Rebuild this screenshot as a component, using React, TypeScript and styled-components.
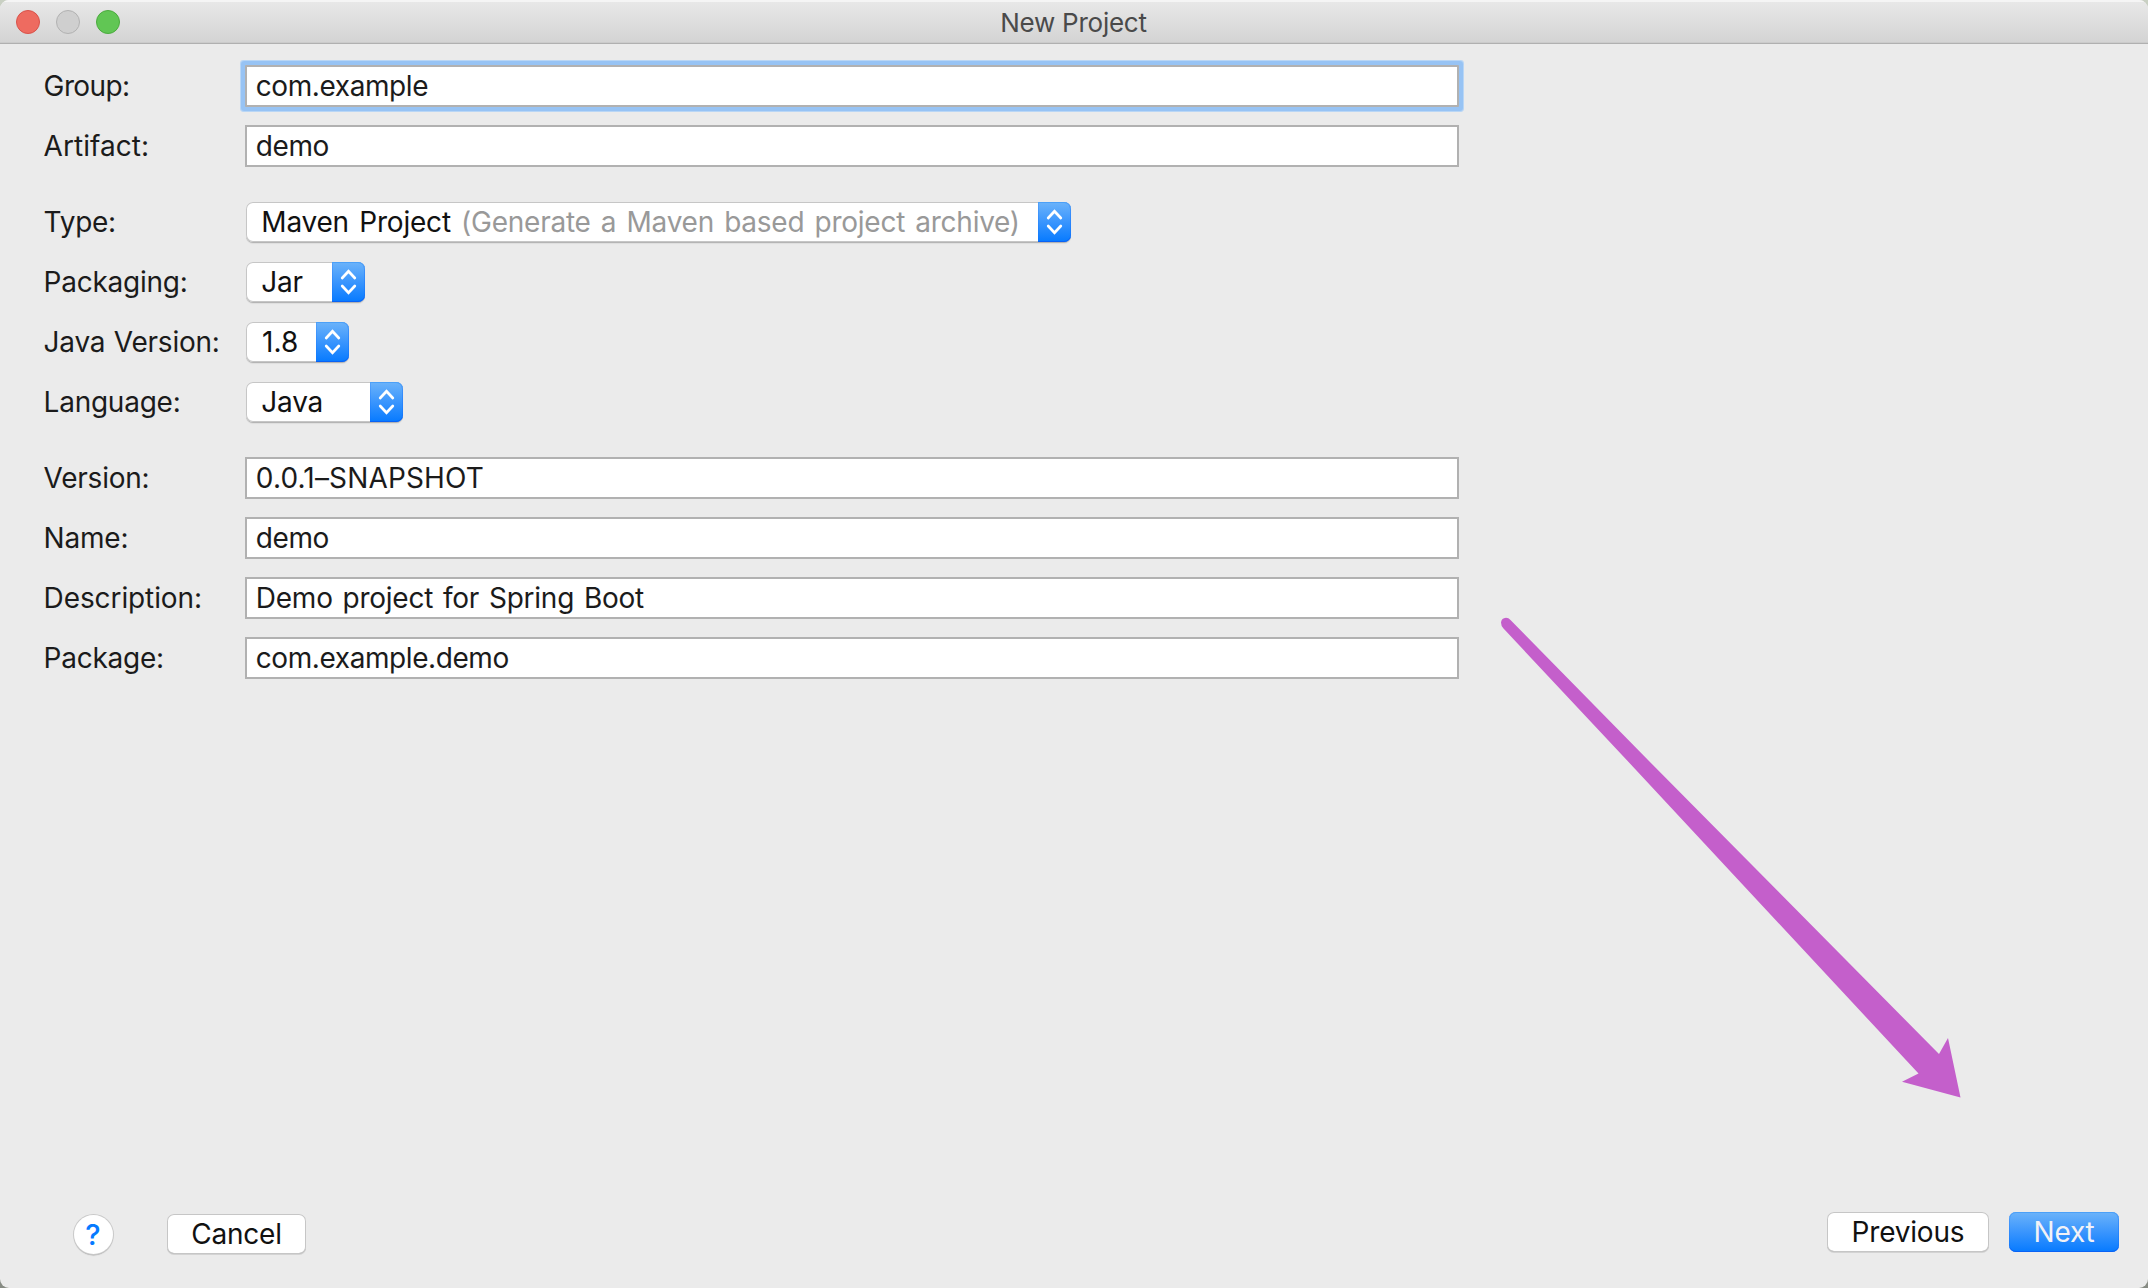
import React from "react";
import styled, { createGlobalStyle, css } from "styled-components";

const GlobalStyle = createGlobalStyle`
  body {
    margin: 0;
    background: linear-gradient(#c9d0c3, #878b83);
  }
`;

const blueFill = css`
  background: linear-gradient(#6cb3fa 0%, #3f98fd 45%, #067aff 100%);
  box-shadow: inset 0 1px 0 #4ba0f8, inset 0 -1px 0 #0a62f4, inset 1px 0 0 rgba(20, 110, 250, 0.25),
    inset -1px 0 0 rgba(20, 110, 250, 0.4);
`;

const Window = styled.main`
  position: relative;
  box-sizing: border-box;
  display: flex;
  flex-direction: column;
  width: 2148px;
  height: 1288px;
  overflow: hidden;
  border-radius: 9px;
  background: #ebebeb;
  color: #1b1b1b;
  font: 28px/40px Inter, "Liberation Sans", sans-serif;
  letter-spacing: -0.25px;
  word-spacing: 2.4px;
`;

const TitleBar = styled.header`
  box-sizing: border-box;
  display: grid;
  grid-template-columns: 1fr auto 1fr;
  align-items: center;
  flex: none;
  height: 44px;
  padding: 0 17px 0 16px;
  border-bottom: 1px solid #b0b0b0;
  background: linear-gradient(#e9e9e9, #d3d3d3);
  box-shadow: inset 0 2px 0 #f5f5f5, inset 0 -1px 0 #cbcbcb;
`;

const Lights = styled.div`
  display: flex;
  gap: 16px;
`;

const Light = styled.i<{ $fill: string; $edge: string }>`
  box-sizing: border-box;
  width: 24px;
  height: 24px;
  border: 1px solid ${(p) => p.$edge};
  border-radius: 50%;
  background: ${(p) => p.$fill};
`;

const Title = styled.h1`
  margin: 0;
  padding-top: 2px;
  color: #4a4a4a;
  font-size: 26px;
  font-weight: 400;
  line-height: 40px;
  word-spacing: 0;
`;

const Form = styled.form`
  display: flex;
  flex: 1;
  flex-direction: column;
  gap: 34px;
  padding: 21px 0 0 43px;
`;

const Section = styled.section`
  display: grid;
  gap: 18px;
`;

const Row = styled.label`
  display: grid;
  grid-template-columns: 202px 1214px;
  align-items: center;
  height: 42px;
`;

const Label = styled.span<{ $tracking?: number }>`
  padding-left: 0.6px;
  letter-spacing: ${(p) => p.$tracking ?? -0.25}px;
  word-spacing: 1px;
`;

const Field = styled.input<{ $focused?: boolean; $tracking?: number }>`
  box-sizing: border-box;
  width: 100%;
  height: 42px;
  padding: 0 8.8px;
  border: 2px solid #b1b1b1;
  border-radius: 0;
  outline: none;
  background: #fff;
  color: inherit;
  font: inherit;
  letter-spacing: ${(p) => p.$tracking ?? -0.42}px;
  word-spacing: 2.2px;
  ${(p) =>
    p.$focused &&
    css`
      border-radius: 1px;
      box-shadow: 0 0 0 4px #97c3f4, 0 0 0 5px #b9d6f5;
    `}
`;

const Select = styled.button<{ $width: number }>`
  box-sizing: border-box;
  display: flex;
  align-items: stretch;
  justify-content: space-between;
  width: ${(p) => p.$width}px;
  height: 40px;
  margin-left: 1px;
  padding: 0;
  border: 0;
  border-radius: 7px;
  background: #fff;
  box-shadow: inset 0 0 0 1px #c6c6c6, 0 1px 0 #b4b4b4, 0 2px 1px rgba(0, 0, 0, 0.06);
  color: #111;
  font: inherit;
`;

const Value = styled.span<{ $tracking?: number; $indent?: number }>`
  padding-left: ${(p) => p.$indent ?? 15.3}px;
  letter-spacing: ${(p) => p.$tracking ?? -0.2}px;
  word-spacing: 2.6px;
  white-space: pre;
`;

const Hint = styled.span`
  color: #999;
  letter-spacing: -0.25px;
`;

const Stepper = styled.span`
  display: grid;
  place-items: center;
  width: 33px;
  height: 40px;
  border-radius: 0 7px 7px 0;
  ${blueFill}
`;

const Footer = styled.footer`
  display: flex;
  align-items: flex-start;
  justify-content: space-between;
  height: 76px;
  padding: 0 29px 0 73.5px;
`;

const Group = styled.div<{ $gap: number; $top?: number }>`
  display: flex;
  align-items: center;
  gap: ${(p) => p.$gap}px;
  padding-top: ${(p) => p.$top ?? 0}px;
`;

const Button = styled.button<{ $width: number; $primary?: boolean }>`
  width: ${(p) => p.$width}px;
  height: 40px;
  padding: 0;
  border: 0;
  border-radius: 7px;
  background: #fff;
  box-shadow: inset 0 0 0 1px #c6c6c6, inset 0 -1px 0 #b0b0b0, 0 1px 0 rgba(0, 0, 0, 0.1);
  color: #111;
  font: inherit;
  letter-spacing: -0.2px;
  ${(p) =>
    p.$primary &&
    css`
      ${blueFill}
      color: #f2f2f6;
    `}
`;

const Help = styled.button`
  display: grid;
  place-items: center;
  width: 39px;
  height: 39px;
  margin-top: 1px;
  padding: 0;
  border: 0;
  border-radius: 50%;
  background: #fff;
  box-shadow: 0 0 0 1px #c9c9c9, 0 1.5px 1px #a8a8a8;
  color: #067aff;
  font: 500 29px/39px Inter, "Liberation Sans", sans-serif;
`;

const Pointer = styled.svg`
  position: absolute;
  left: 1490px;
  top: 600px;
  pointer-events: none;
`;

function Chevrons() {
  return (
    <Stepper>
      <svg width="33" height="40" fill="none" stroke="#fff" strokeWidth="2.7" strokeLinecap="round" strokeLinejoin="miter">
        <path d="M10.2 16 16.5 9.3 22.8 16M10.2 24 16.5 30.7 22.8 24" />
      </svg>
    </Stepper>
  );
}

interface TextRowProps {
  label: string;
  value: string;
  focused?: boolean;
  tracking?: number;
  labelTracking?: number;
}

function TextRow({ label, value, focused, tracking, labelTracking }: TextRowProps) {
  return (
    <Row>
      <Label $tracking={labelTracking}>{label}</Label>
      <Field readOnly value={value} $focused={focused} $tracking={tracking} />
    </Row>
  );
}

interface SelectRowProps {
  label: string;
  value: string;
  width: number;
  hint?: string;
  tracking?: number;
  indent?: number;
}

function SelectRow({ label, value, width, hint, tracking, indent }: SelectRowProps) {
  return (
    <Row as="div">
      <Label>{label}</Label>
      <Select type="button" $width={width}>
        <Value $tracking={tracking} $indent={indent}>
          {value}
          {hint && <Hint> {hint}</Hint>}
        </Value>
        <Chevrons />
      </Select>
    </Row>
  );
}

export default function App() {
  return (
    <Window>
      <GlobalStyle />
      <TitleBar>
        <Lights>
          <Light $fill="#ee6b60" $edge="#d9524a" />
          <Light $fill="#cfcfcf" $edge="#b2b2b2" />
          <Light $fill="#61c654" $edge="#4bab3e" />
        </Lights>
        <Title>New Project</Title>
        <span />
      </TitleBar>
      <Form>
        <Section>
          <TextRow label="Group:" value="com.example" focused labelTracking={-0.6} />
          <TextRow label="Artifact:" value="demo" labelTracking={0.05} />
        </Section>
        <Section>
          <SelectRow label="Type:" value="Maven Project" hint="(Generate a Maven based project archive)" width={825} />
          <SelectRow label="Packaging:" value="Jar" width={119} />
          <SelectRow label="Java Version:" value="1.8" width={103} tracking={0.1} indent={16} />
          <SelectRow label="Language:" value="Java" width={157} />
        </Section>
        <Section>
          <TextRow label="Version:" value="0.0.1–SNAPSHOT" tracking={0.16} />
          <TextRow label="Name:" value="demo" labelTracking={-0.2} />
          <TextRow label="Description:" value="Demo project for Spring Boot" tracking={-0.24} labelTracking={-0.1} />
          <TextRow label="Package:" value="com.example.demo" />
        </Section>
      </Form>
      <Footer>
        <Group $gap={54.5} $top={2}>
          <Help type="button">?</Help>
          <Button type="button" $width={139}>Cancel</Button>
        </Group>
        <Group $gap={20}>
          <Button type="button" $width={162}>Previous</Button>
          <Button type="button" $width={110} $primary>Next</Button>
        </Group>
      </Footer>
      <Pointer width="480" height="510" viewBox="1490 600 480 510" aria-hidden="true">
        <path
          d="M1501 622.5 Q1501.5 618 1506 617.7 Q1508.500 617.7 1510.500 620 L1648 760 L1939 1054 L1948 1038 L1960.500 1097.500 L1902 1081.700 L1918.500 1073.500 L1626.700 760 L1503.500 628.500 Q1501 626 1501 622.500 Z"
          fill="#c45fcb"
        />
      </Pointer>
    </Window>
  );
}
